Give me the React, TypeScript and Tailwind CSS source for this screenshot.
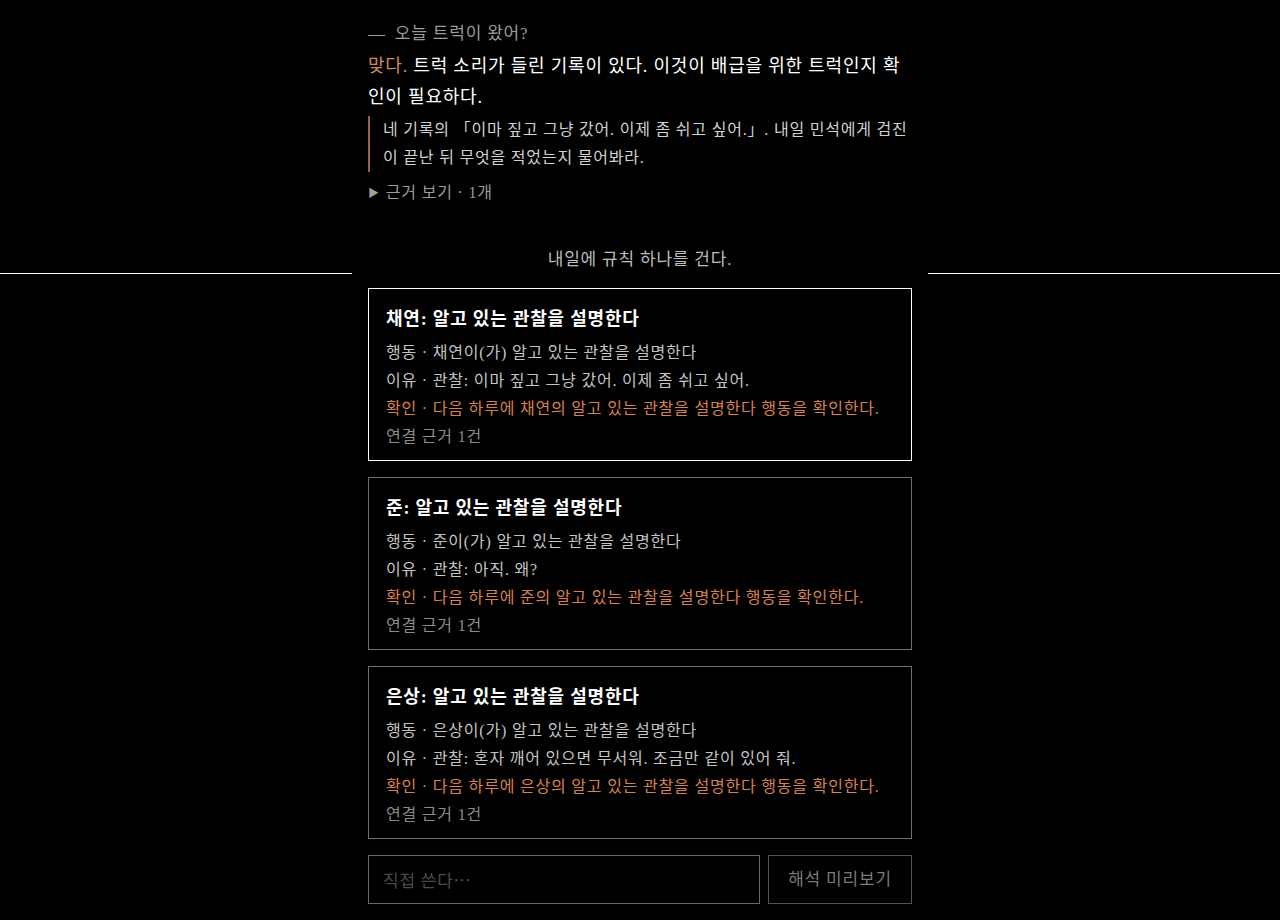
import React from "react";

type Rule = {
  name: string;
  reason: string;
  selected?: boolean;
};

const rules: Rule[] = [
  { name: "채연", reason: "이마 짚고 그냥 갔어. 이제 좀 쉬고 싶어.", selected: true },
  { name: "준", reason: "아직. 왜?" },
  { name: "은상", reason: "혼자 깨어 있으면 무서워. 조금만 같이 있어 줘." },
];

function RuleCard({ rule }: { rule: Rule }) {
  return (
    <div
      className={`border px-[17px] pt-[18px] pb-[9px] ${
        rule.selected ? "border-white" : "border-[#6f6f6f]"
      }`}
    >
      <h3 className="font-bold text-white text-[18px] leading-[24px] mb-[8px]">
        {rule.name}: 알고 있는 관찰을 설명한다
      </h3>
      <div className="text-[16px] leading-[28px]">
        <p className="text-[#c4c4c4]">행동 · {rule.name}이(가) 알고 있는 관찰을 설명한다</p>
        <p className="text-[#c4c4c4]">이유 · 관찰: {rule.reason}</p>
        <p className="text-[#d9804f]">
          확인 · 다음 하루에 {rule.name}의 알고 있는 관찰을 설명한다 행동을 확인한다.
        </p>
        <p className="text-[#8c8c8c]">연결 근거 1건</p>
      </div>
    </div>
  );
}

export default function App() {
  return (
    <div
      className="min-h-[920px] bg-black pt-[20px] pb-4 tracking-[0.05em]"
      style={{ fontFamily: '"Liberation Serif", "Noto Sans CJK KR", serif' }}
    >
      <div className="w-[544px] mx-auto">
        <p className="text-[17px] leading-[28px] text-[#9b9b9b]">
          <span className="mr-[4px]">—</span> 오늘 트럭이 왔어?
        </p>
        <p className="mt-[3px] text-[18px] leading-[31px] text-white">
          <span className="text-[#d08a5e]">맞다.</span> 트럭 소리가 들린 기록이 있다. 이것이
          배급을 위한 트럭인지 확인이 필요하다.
        </p>
        <blockquote className="mt-[3px] border-l-2 border-[#9a6446] pl-[13px] text-[16px] leading-[28px] text-[#d0d0d0]">
          네 기록의 「이마 짚고 그냥 갔어. 이제 좀 쉬고 싶어.」. 내일 민석에게 검진이 끝난 뒤
          무엇을 적었는지 물어봐라.
        </blockquote>
        <div className="mt-[8px] flex items-center gap-[6px] text-[16px] leading-[26px] text-[#9b9b9b]">
          <span className="text-[11px] text-[#a0a0a0]">▶</span>
          <span>근거 보기 · 1개</span>
        </div>
      </div>

      <div className="mt-[40px] flex items-end">
        <div className="flex-1 h-px bg-white" />
        <div className="w-[576px] text-center text-[17px] leading-[28px] text-[#bdbdbd]">
          내일에 규칙 하나를 건다.
        </div>
        <div className="flex-1 h-px bg-white" />
      </div>

      <div className="w-[544px] mx-auto mt-[14px] flex flex-col gap-4">
        {rules.map((r) => (
          <RuleCard key={r.name} rule={r} />
        ))}
        <div className="flex gap-2">
          <input
            placeholder="직접 쓴다…"
            style={{ fontFamily: '"Noto Sans CJK KR", sans-serif' }}
            className="flex-1 h-[49px] bg-black border border-[#6a6a6a] px-[14px] text-[17px] tracking-[0.05em] text-white placeholder:text-[#4a4a4a] outline-none"
          />
          <button className="w-[144px] h-[49px] border border-[#555555] text-[17px] text-[#7a7a7a]">
            해석 미리보기
          </button>
        </div>
      </div>
    </div>
  );
}
